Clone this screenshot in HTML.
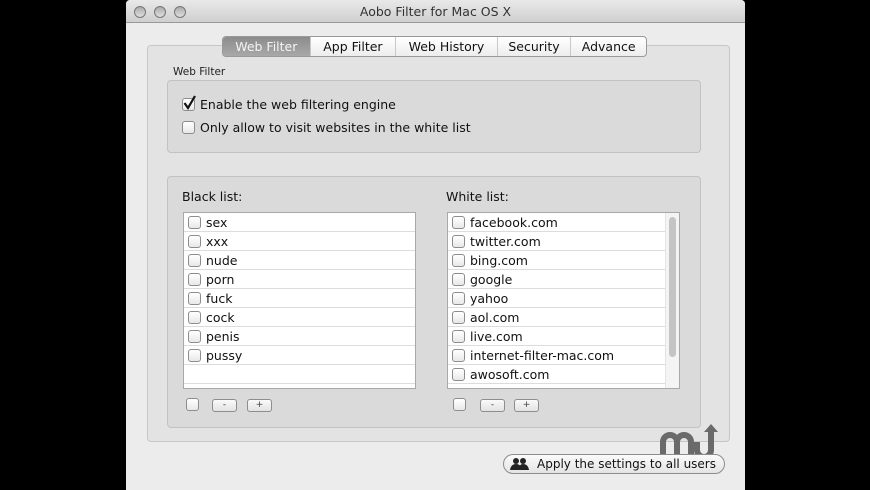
<!DOCTYPE html>
<html><head><meta charset="utf-8"><style>
*{box-sizing:border-box;margin:0;padding:0}
body{width:870px;height:490px;background:#000;position:relative;overflow:hidden;font-family:"DejaVu Sans","Liberation Sans",sans-serif;color:#111}
.a{position:absolute}
.win{left:126px;top:0;width:619px;height:490px;background:#ececec;border-radius:4px 4px 0 0}
.title{left:126px;top:0;width:619px;height:23px;background:linear-gradient(#e9e9e9,#cfcfcf);border-bottom:1px solid #999;border-radius:4px 4px 0 0;text-align:center;font-size:12.5px;line-height:23px;color:#333}
.dot{width:12px;height:12px;border-radius:50%;border:1px solid #777;background:linear-gradient(#aaa,#e0e0e0);top:6px}
.panel{left:147px;top:45px;width:583px;height:397px;background:#e3e3e3;border:1px solid #c6c6c6;border-radius:4px}
.tabs{left:222px;top:36px;height:21px;width:425px;background:linear-gradient(#fff,#ededed);border:1px solid #999;border-radius:4px;display:flex;font-size:12.5px;line-height:19px}
.tabs div{border-left:1px solid #c8c8c8;text-align:center}
.tabs div.sel{background:linear-gradient(#8c8c8c,#a8a8a8);color:#f4f4f4;border:none;border-radius:3px 0 0 3px}
.grp{background:#dadada;border:1px solid #c2c2c2;border-radius:4px}
.cb{width:13px;height:13px;border:1px solid #8d8d8d;border-radius:3px;background:linear-gradient(#fff,#e8e8e8)}
.t13{font-size:12.5px}
.list{background:#fff;border:1px solid #a8a8a8}
.row{height:19px;border-bottom:1px solid #dcdcdc;position:relative;font-size:12.5px;line-height:20px;padding-left:22px}
.row .cb{position:absolute;left:4px;top:3px}
.btn{height:13px;border:1px solid #8d8d8d;border-radius:3px;background:linear-gradient(#fafafa,#e2e2e2);font-size:9px;line-height:11px;text-align:center;color:#444}
</style></head><body>
<div class="a win"></div>
<div class="a title">Aobo Filter for Mac OS X</div>
<div class="a dot" style="left:134px"></div>
<div class="a dot" style="left:154px"></div>
<div class="a dot" style="left:174px"></div>
<div class="a panel"></div>
<div class="a tabs">
<div class="sel" style="width:87px;border-left:none">Web Filter</div>
<div style="width:86px">App Filter</div>
<div style="width:102px">Web History</div>
<div style="width:74px">Security</div>
<div style="width:76px">Advance</div>
</div>
<div class="a" style="left:173px;top:66px;font-size:10.5px;color:#222">Web Filter</div>
<div class="a grp" style="left:167px;top:80px;width:534px;height:73px"></div>
<div class="a cb" style="left:182px;top:98px"></div>
<svg class="a" style="left:182px;top:94px" width="16" height="17" viewBox="0 0 16 17"><path d="M2.5 9 L6 14 L13 2" fill="none" stroke="#111" stroke-width="2.2"/></svg>
<div class="a t13" style="left:200px;top:97px">Enable the web filtering engine</div>
<div class="a cb" style="left:182px;top:121px"></div>
<div class="a t13" style="left:200px;top:120px">Only allow to visit websites in the white list</div>
<div class="a grp" style="left:167px;top:176px;width:534px;height:252px"></div>
<div class="a t13" style="left:182px;top:189px">Black list:</div>
<div class="a t13" style="left:446px;top:189px">White list:</div>
<div class="a list" style="left:183px;top:212px;width:233px;height:177px">
<div class="row"><span class="cb"></span>sex</div>
<div class="row"><span class="cb"></span>xxx</div>
<div class="row"><span class="cb"></span>nude</div>
<div class="row"><span class="cb"></span>porn</div>
<div class="row"><span class="cb"></span>fuck</div>
<div class="row"><span class="cb"></span>cock</div>
<div class="row"><span class="cb"></span>penis</div>
<div class="row"><span class="cb"></span>pussy</div>
<div class="row"></div>
</div>
<div class="a list" style="left:447px;top:212px;width:233px;height:177px;overflow:hidden">
<div style="width:217px">
<div class="row"><span class="cb"></span>facebook.com</div>
<div class="row"><span class="cb"></span>twitter.com</div>
<div class="row"><span class="cb"></span>bing.com</div>
<div class="row"><span class="cb"></span>google</div>
<div class="row"><span class="cb"></span>yahoo</div>
<div class="row"><span class="cb"></span>aol.com</div>
<div class="row"><span class="cb"></span>live.com</div>
<div class="row"><span class="cb"></span>internet-filter-mac.com</div>
<div class="row"><span class="cb"></span>awosoft.com</div>
</div>
<div class="a" style="left:217px;top:0;width:15px;height:175px;background:#f4f4f4;border-left:1px solid #e4e4e4"></div>
<div class="a" style="left:221px;top:4px;width:7px;height:140px;background:#c4c4c4;border-radius:4px"></div>
</div>
<div class="a cb" style="left:186px;top:398px"></div>
<div class="a btn" style="left:212px;top:399px;width:25px">-</div>
<div class="a btn" style="left:247px;top:399px;width:25px">+</div>
<div class="a cb" style="left:453px;top:398px"></div>
<div class="a btn" style="left:480px;top:399px;width:25px">-</div>
<div class="a btn" style="left:514px;top:399px;width:25px">+</div>
<svg class="a" style="left:658px;top:424px" width="60" height="36" viewBox="0 0 60 36">
<path d="M5 34 V18 a7 7 0 0 1 14 0 V34 M19 18 a7 7 0 0 1 14 0 V34 M39 18 V26 a7 7 0 0 0 14 0 V6" fill="none" stroke="#6a6a6a" stroke-width="6"/>
<path d="M46 8 L53 0 L60 8 Z" fill="#6a6a6a"/>
</svg>
<div class="a" style="left:503px;top:454px;width:222px;height:20px;border:1px solid #8d8d8d;border-radius:10px;background:linear-gradient(#fbfbfb,#e4e4e4);font-size:12px;line-height:18px;padding-left:33px;white-space:nowrap">Apply the settings to all users</div>
<svg class="a" style="left:510px;top:457px" width="20" height="14" viewBox="0 0 20 14">
<circle cx="6" cy="4" r="3" fill="#222"/><circle cx="13" cy="4" r="3" fill="#222"/>
<path d="M0 13 Q1 7 6 7 Q11 7 12 13 Z M8 13 Q9 7 13 7 Q18 7 19 13 Z" fill="#222"/>
</svg>
</body></html>
